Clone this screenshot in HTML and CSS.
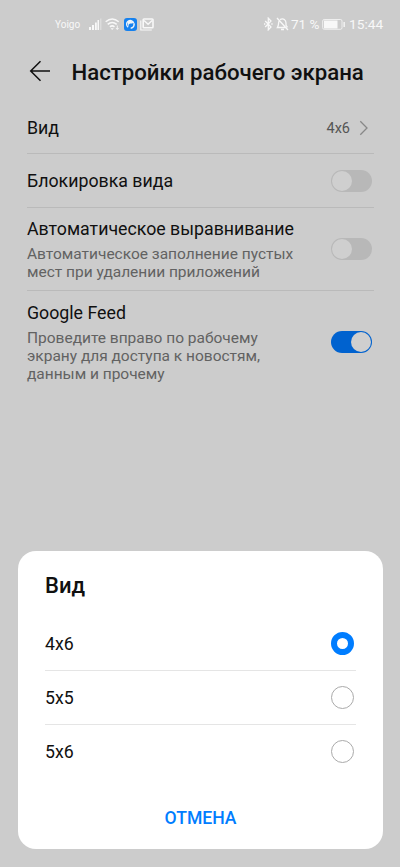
FILE: index.html
```html
<!DOCTYPE html>
<html lang="ru">
<head>
<meta charset="utf-8">
<meta name="viewport" content="width=device-width, initial-scale=1">
<title>Настройки рабочего экрана</title>
<link rel="stylesheet" href="styles.css">
</head>
<body>
<div class="screen">
  <div class="status">
    <div class="status-left">
      <span class="carrier">Yoigo</span>
      <svg class="signal" width="14" height="14" viewBox="0 0 14 14" fill="currentColor"><path d="M1 10h2v3H1zM4 8h2v5H4zM7 5.500h1.800V13H7zM9.500 3h1.500v10H9.500z"/><path opacity=".35" d="M12 1.500h1.500V13H12z"/></svg>
      <svg class="wifi" width="16" height="14" viewBox="0 0 16 14" fill="none" stroke="currentColor" stroke-width="1.500"><path d="M.7 4.800Q7.200-.9 13.700 4.800M2.700 7.400q4.500-3.800 9 0M4.900 9.900q2.300-2 4.600 0"/><path d="M5.600 11.200h3.200L7.200 13z" fill="currentColor" stroke="none"/><path d="M12.300 8.500V12M11 11l1.300 1.600 1.300-1.600" stroke-width=".9"/></svg>
      <svg class="app" width="13" height="13" viewBox="0 0 13 13"><rect width="13" height="13" rx="3" fill="#1681ee"/><path d="M4.100 9.200A3.700 3.700 0 1 1 9.900 5.500" fill="none" stroke="#f1f5f8" stroke-width="1.300"/><path d="M3.500 3.800c2.500-2 5-.8 5.800 1.200-1.800.8-3.600.3-4.500 1.400-.5.700 0 1.600-.7 2.200z" fill="#f1f5f8"/><path d="M10 5.500c.5 2.400-.7 4.500-3.300 4.800" fill="none" stroke="#f1f5f8" stroke-width="1.500"/></svg>
      <svg class="mail" width="14" height="13" viewBox="0 0 14 13" fill="none" stroke="currentColor"><path d="M.8 2.500V12h11" stroke-width="1.200"/><rect x="3.200" y="1" width="9.800" height="8.800" rx=".8" stroke-width="1.600"/><path d="M4 2.500l4.100 3.800 4.100-3.800" stroke-width="1.500"/></svg>
    </div>
    <div class="status-right">
      <svg class="bt" width="9" height="14" viewBox="0 0 9 14" fill="none" stroke="currentColor" stroke-width="1.300"><path d="M1.200 4l5.800 6-2.700 2.800V1.200L7 4l-5.800 6"/><path d="M0 7h1.300M7.300 7h1.300" stroke-width="1.400"/></svg>
      <svg class="bell" width="13" height="14" viewBox="0 0 13 14" fill="none" stroke="currentColor" stroke-width="1.300"><path d="M4 2.600C7.500.6 10 3 10 6v2.300l1.500 2M2.900 4.200C2.300 6 3 8 1.400 10.500h7.800M5 12.500h3M1 1l11 12"/></svg>
      <span class="percent">71 %</span>
      <svg class="battery" width="24" height="12" viewBox="0 0 24 12"><rect x=".7" y="1.500" width="19.300" height="9.800" rx="1.500" fill="none" stroke="currentColor" stroke-width=".8"/><rect x="2" y="2.500" width="13.500" height="8" fill="currentColor"/><path d="M21.500 4h1.300v5h-1.300z" fill="currentColor"/></svg>
      <span class="clock">15:44</span>
    </div>
  </div>

  <header class="header">
    <svg class="back" width="22" height="22" viewBox="0 0 22 22" fill="none" stroke="currentColor" stroke-width="1.500"><path d="M11.500 1.200L1.700 11l9.800 9.800M1.700 11H21"/></svg>
    <h1>Настройки рабочего экрана</h1>
  </header>

  <main class="settings">
    <div class="row row-view">
      <span class="name">Вид</span>
      <span class="value">4x6</span>
      <svg class="chevron" width="10" height="16" viewBox="0 0 10 16" fill="none" stroke="currentColor" stroke-width="1.300"><path d="M1.300 1.300L8 8l-6.700 6.700"/></svg>
    </div>
    <div class="row row-lock">
      <span class="name">Блокировка вида</span>
      <span class="switch"></span>
    </div>
    <div class="row row-align">
      <div class="text">
        <div class="name">Автоматическое выравнивание</div>
        <div class="desc">Автоматическое заполнение пустых<br>мест при удалении приложений</div>
      </div>
      <span class="switch"></span>
    </div>
    <div class="row row-feed">
      <div class="text">
        <div class="name">Google Feed</div>
        <div class="desc">Проведите вправо по рабочему<br>экрану для доступа к новостям,<br>данным и прочему</div>
      </div>
      <span class="switch on"></span>
    </div>
  </main>

  <section class="dialog">
    <h2>Вид</h2>
    <div class="option"><span>4x6</span><span class="radio checked"></span></div>
    <div class="option"><span>5x5</span><span class="radio"></span></div>
    <div class="option"><span>5x6</span><span class="radio"></span></div>
    <div class="cancel">ОТМЕНА</div>
  </section>
</div>
</body>
</html>
```
FILE: styles.css
```css
* { box-sizing: border-box; }
body { margin: 0; background: #ccc; font-family: Roboto, "Noto Sans", sans-serif; color: #101010; }
svg { display: block; flex: none; }
h1, h2 { margin: 0; font-weight: 500; }
.screen { width: 400px; height: 867px; display: flex; flex-direction: column; overflow: hidden; white-space: nowrap; }

.status { height: 48px; flex: none; display: flex; justify-content: space-between; align-items: center; padding: 0 18px 0 55px; color: #f8f8f8; }
.status-left, .status-right { display: flex; align-items: center; }
.carrier { width: 33px; font-size: 10px; line-height: 14px; padding-top: 1px; }
.wifi { margin-left: 3px; }
.app { margin-left: 3px; }
.mail { margin-left: 3px; }
.bell { margin-left: 3px; }
.percent { width: 31px; margin-left: 2px; font-size: 13.500px; }
.clock { width: 33px; margin-left: 3px; font-size: 13.700px; }

.header { height: 54px; flex: none; display: flex; align-items: center; padding: 0 0 8px 29px; }
.header h1 { margin-left: 20.500px; font-size: 22.200px; line-height: 28px; padding-top: 2px; }

.settings { flex: none; padding: 0 26px 0 27px; }
.row { display: flex; align-items: center; border-bottom: 1px solid #bababa; }
.name { font-size: 17.750px; line-height: 22px; }
.desc { margin-top: 5px; margin-bottom: -1px; font-size: 15.500px; line-height: 18px; color: #626262; letter-spacing: -.01px; }
.row-view { height: 52px; }
.row-view .name, .row-lock .name { flex: 1; }
.value { font-size: 14.500px; color: #555; padding-top: 1px; }
.chevron { margin: 0 5px 0 9px; color: #888; }
.row-lock { height: 54px; }
.row-align { height: 83px; }
.row-feed { height: 102px; border: 0; }
.text { flex: 1; }
.switch { width: 41px; height: 22px; flex: none; margin-right: 2px; padding: 1px; border-radius: 11px; background: #b8b8b8; display: flex; }
.switch::before { content: ""; width: 20px; height: 20px; border-radius: 50%; background: #cfcfcf; }
.switch.on { background: #0062cf; justify-content: flex-end; }

.dialog { width: 365px; height: 298px; flex: none; margin: auto 0 18px 18px; padding: 20px 27px 0; border-radius: 18px; background: #fff; }
.dialog h2 { height: 46px; font-size: 22px; line-height: 30px; }
.option { height: 54px; display: flex; align-items: center; justify-content: space-between; border-bottom: 1px solid #e5e5e5; font-size: 17.700px; padding-right: 2px; }
.option:nth-of-type(3) { border-color: transparent; }
.radio { width: 23px; height: 23px; border: 1px solid #aaa; border-radius: 50%; }
.radio.checked { border: 6px solid #007dff; }
.cancel { margin-top: 28px; text-align: center; font-size: 17.600px; line-height: 22px; font-weight: 500; color: #007dff; }
```
